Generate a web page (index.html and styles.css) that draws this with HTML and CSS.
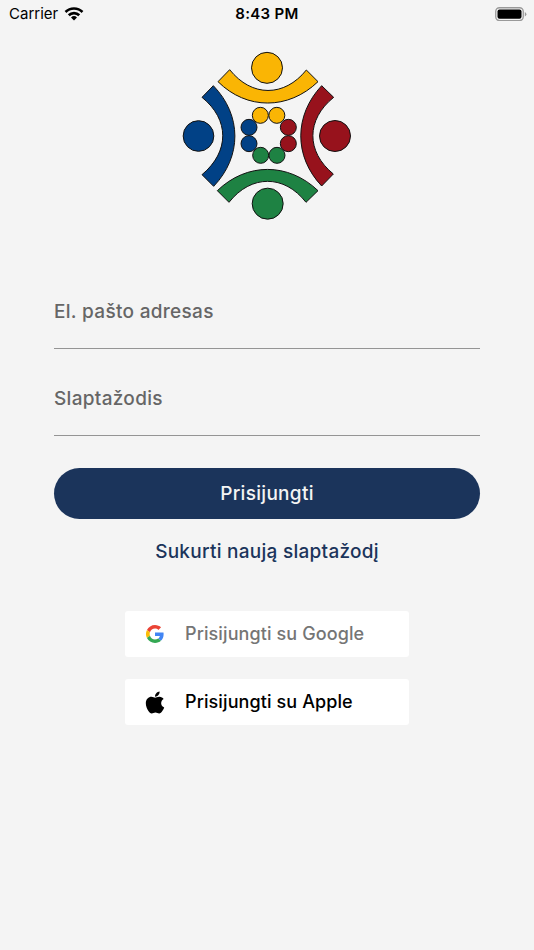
FILE: index.html
```html
<!DOCTYPE html>
<html lang="lt">
<head>
    <meta charset="UTF-8">
    <meta name="viewport" content="width=device-width, initial-scale=1.0">
    <title>Prisijungti</title>
    <link rel="stylesheet" href="styles.css">
</head>
<body>
    <header class="status-bar">
        <div class="carrier">
            <span>Carrier</span>
            <svg class="wifi" viewBox="0 0 20 15">
                <path d="M.6 5.1a13.4 13.4 0 0 1 18.8 0l-1.8 1.9a10.8 10.8 0 0 0-15.2 0z"/>
                <path d="M3.8 8.3a8.8 8.8 0 0 1 12.4 0l-1.9 1.9a6.2 6.2 0 0 0-8.6 0z"/>
                <path d="M7 11.5a4.3 4.3 0 0 1 6 0l-3 3z"/>
            </svg>
        </div>
        <div class="time">8:43 PM</div>
        <svg class="battery" viewBox="0 0 32 14">
            <rect x="0.75" y="0.75" width="27.5" height="12.8" rx="3.7" fill="#f4f4f4" stroke="#999" stroke-width="1.3"/>
            <rect x="2.5" y="2.5" width="24" height="9.300" rx="2"/>
            <path d="M29.8 5v4.4q1.6-.8 1.6-2.2t-1.6-2.2z" fill="#999"/>
        </svg>
    </header>

    <main class="login">
        <svg class="logo" viewBox="0 0 555 540">
            <g class="yellow">
                <circle cx="276" cy="68.500" r="46.500"/>
                <path d="M164 74C230 157 328 157 394 75L429 110C340 195.500 215 195.500 129 110Z"/>
                <circle cx="256" cy="211" r="24"/>
                <circle cx="305.500" cy="211" r="24"/>
            </g>
            <g class="red">
                <circle cx="480" cy="273" r="46.500"/>
                <path d="M476 157C393 224 393 320 475 387L440 423C356 334 357 211 440 122Z"/>
                <circle cx="340" cy="247" r="24"/>
                <circle cx="340" cy="296" r="24"/>
            </g>
            <g class="green">
                <circle cx="278" cy="476" r="46.500"/>
                <path d="M162 472C228 388 328 388 393 472L429 437C340 352 215 352 127 437Z"/>
                <circle cx="257" cy="331" r="24"/>
                <circle cx="306" cy="331" r="24"/>
            </g>
            <g class="blue">
                <circle cx="70.500" cy="273" r="46"/>
                <path d="M81 157C164 224 164 320 81 389L116 424C201 335 201 211 115 122Z"/>
                <circle cx="222" cy="247" r="24"/>
                <circle cx="222" cy="296" r="24"/>
            </g>
        </svg>

        <form class="login-form">
            <input class="field" type="text" placeholder="El. pašto adresas">
            <input class="field" type="password" placeholder="Slaptažodis">
            <button class="login-btn" type="button">Prisijungti</button>
        </form>
        <a class="new-password">Sukurti naują slaptažodį</a>

        <div class="social">
            <button class="social-btn google" type="button">
                <svg class="social-icon" viewBox="0 0 48 48">
                    <path fill="#ea4335" d="M24 9.500c3.540 0 6.710 1.220 9.210 3.600l6.850-6.850C35.900 2.380 30.470 0 24 0 14.620 0 6.510 5.380 2.560 13.220l7.980 6.190C12.430 13.720 17.740 9.500 24 9.500z"/>
                    <path fill="#4285f4" d="M46.980 24.550c0-1.570-.15-3.090-.38-4.550H24v9.020h12.940c-.58 2.960-2.260 5.480-4.780 7.180l7.730 6c4.510-4.180 7.090-10.360 7.090-17.650z"/>
                    <path fill="#fbbc05" d="M10.530 28.590a14.500 14.500 0 0 1 0-9.180l-7.980-6.190a24 24 0 0 0 0 21.560z"/>
                    <path fill="#34a853" d="M24 48c6.480 0 11.930-2.130 15.890-5.810l-7.730-6c-2.150 1.450-4.920 2.300-8.160 2.300-6.260 0-11.570-4.220-13.470-9.910l-7.980 6.190C6.510 42.620 14.620 48 24 48z"/>
                </svg>
                <span>Prisijungti su Google</span>
            </button>
            <button class="social-btn apple" type="button">
                <svg class="social-icon" viewBox="0 0 384 512">
                    <path d="M318.700 268.700c-.2-36.700 16.400-64.400 50-84.800-18.800-26.900-47.200-41.700-84.700-44.600-35.500-2.800-74.300 20.700-88.500 20.700-15 0-49.400-19.700-76.400-19.700C63.300 141.200 4 184.800 4 273.500q0 39.300 14.400 81.200c12.800 36.700 59 126.700 107.200 125.200 25.200-.6 43-17.900 75.800-17.900 31.800 0 48.300 17.900 76.400 17.900 48.600-.7 90.400-82.500 102.600-119.300-65.200-30.700-61.700-90-61.700-91.900zm-56.600-164.200c27.300-32.400 24.800-61.900 24-72.500-24.100 1.400-52 16.400-67.900 34.900-17.500 19.800-27.800 44.300-25.600 71.900 26.100 2 49.900-11.400 69.500-34.300z"/>
                </svg>
                <span>Prisijungti su Apple</span>
            </button>
        </div>
    </main>
</body>
</html>
```
FILE: styles.css
```css
* {
    margin: 0;
    padding: 0;
    box-sizing: border-box;
}

body {
    font-family: Inter, 'Liberation Sans', sans-serif;
    background-color: #f4f4f4;
    height: 100vh;
    overflow: hidden;
}

button,
input {
    font-family: inherit;
    border: none;
}

.status-bar {
    display: grid;
    grid-template-columns: 1fr auto 1fr;
    align-items: center;
    height: 27px;
    padding: 0 7px 0 9px;
    font-size: 15px;
    color: #000;
}

.carrier {
    display: flex;
    align-items: center;
    gap: 6px;
}

.wifi {
    width: 20px;
    height: 15px;
}

.time {
    padding-right: 2px;
    font-weight: 600;
    letter-spacing: 0.3px;
}

.battery {
    width: 32px;
    height: 14px;
    justify-self: end;
}

.login {
    display: flex;
    flex-direction: column;
    align-items: center;
    padding: 18px 54px 0;
}

.logo {
    width: 185px;
    height: 180px;
    stroke: #111;
    stroke-width: 3;
}

.yellow {
    fill: #fab504;
}

.red {
    fill: #97121c;
}

.green {
    fill: #1e8243;
}

.blue {
    fill: #014186;
}

.login-form {
    display: flex;
    flex-direction: column;
    width: 100%;
    margin-top: 49px;
}

.field {
    height: 75px;
    margin-bottom: 12px;
    padding-top: 1px;
    border-bottom: 1px solid #949494;
    background: transparent;
    font-size: 19px;
    font-weight: 450;
    letter-spacing: 0.3px;
    outline: none;
}

.field::placeholder {
    color: #666;
    opacity: 1;
}

.login-btn {
    height: 51px;
    margin-top: 20px;
    border-radius: 26px;
    background-color: #1b345b;
    color: #f4f4f4;
    font-size: 19px;
    font-weight: 500;
    letter-spacing: 0.3px;
}

.new-password {
    margin-top: 21px;
    color: #1b345b;
    font-size: 19px;
    font-weight: 500;
    line-height: 23px;
    letter-spacing: 0.27px;
}

.social {
    display: flex;
    flex-direction: column;
    gap: 22px;
    width: 284px;
    margin-top: 48px;
}

.social-btn {
    display: flex;
    align-items: center;
    height: 46px;
    padding: 0 20px;
    gap: 20px;
    border-radius: 3px;
    background-color: #fff;
    font-size: 18px;
    font-weight: 500;
    letter-spacing: 0.1px;
}

.social-btn span {
    padding-bottom: 2px;
}

.google {
    color: #757575;
}

.apple {
    color: #000;
}

.social-icon {
    width: 20px;
    height: 18px;
}

.apple .social-icon {
    height: 25px;
}
```
